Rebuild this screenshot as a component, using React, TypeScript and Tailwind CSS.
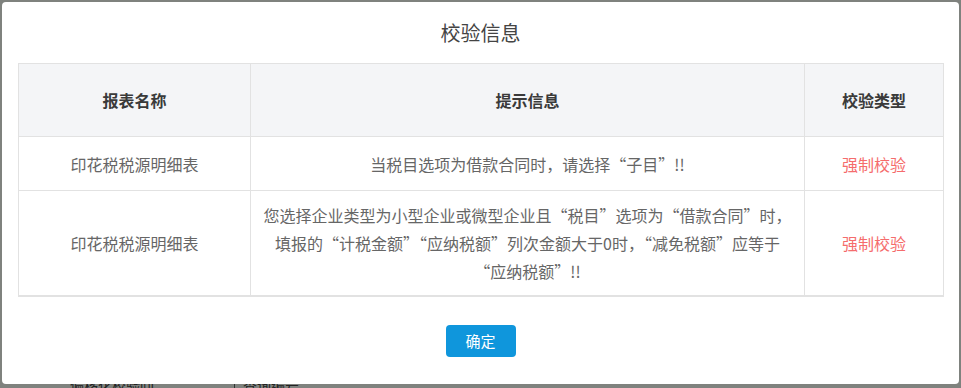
import React from 'react';

interface Row {
  report: string;
  lines: string[];
  type: string;
}

const rows: Row[] = [
  {
    report: '印花税税源明细表',
    lines: ['当税目选项为借款合同时，请选择“子目”!!'],
    type: '强制校验'
  },
  {
    report: '印花税税源明细表',
    lines: [
      '您选择企业类型为小型企业或微型企业且“税目”选项为“借款合同”时，',
      '填报的“计税金额”“应纳税额”列次金额大于0时，“减免税额”应等于',
      '“应纳税额”!!'
    ],
    type: '强制校验'
  }
];

export default function App() {
  return (
    <div
      className="h-[388px] w-[961px] overflow-hidden bg-[#7f827e] pt-[2px] pl-[2px]"
      style={{ fontFamily: '"Noto Sans CJK SC", "Noto Sans", sans-serif' }}
    >
      <div className="flex h-[382px] w-[957px] flex-col rounded-[4px] bg-white">
        <div className="flex h-[61px] items-center justify-center text-[20px] text-[#444]">
          校验信息
        </div>

        <div className="mx-[16px] w-[926px] border border-b-2 border-[#e2e2e2]">
          <div className="grid grid-cols-[232px_554px_1fr] bg-[#f4f5f7] text-[16px] font-bold text-[#3a3a3a]">
            <div className="flex h-[73px] items-center justify-center border-r border-b border-[#e2e2e2]">
              报表名称
            </div>
            <div className="flex h-[73px] items-center justify-center border-r border-b border-[#e2e2e2]">
              提示信息
            </div>
            <div className="flex h-[73px] items-center justify-center border-b border-[#e2e2e2]">
              校验类型
            </div>
          </div>

          {rows.map((row, i) => (
            <div
              key={i}
              className={
                i === 0
                  ? 'grid h-[54px] grid-cols-[232px_554px_1fr] border-b border-[#e2e2e2] text-[16px] text-[#666]'
                  : 'grid h-[104px] grid-cols-[232px_554px_1fr] text-[16px] text-[#666]'
              }
            >
              <div className="flex items-center justify-center border-r border-[#e2e2e2]">
                {row.report}
              </div>
              <div className="flex flex-col items-center justify-center border-r border-[#e2e2e2] leading-[28px]">
                {row.lines.map((line, j) => (
                  <span key={j} className="whitespace-nowrap">
                    {line}
                  </span>
                ))}
              </div>
              <div className="flex items-center justify-center text-[#f56c6c]">
                {row.type}
              </div>
            </div>
          ))}
        </div>

        <div className="mt-[28px] flex justify-center">
          <button
            type="button"
            className="h-[32px] w-[70px] rounded-[4px] bg-[#0f96dc] text-[15px] text-white"
          >
            确定
          </button>
        </div>
      </div>

      <div className="flex h-[4px] items-start overflow-hidden text-[14px] leading-[14px] text-[#222]">
        <span className="ml-[68px] mt-[-6px]">偏移化校验回</span>
        <span className="ml-[80px] mt-[-6px] border-l border-[#333] pl-[8px]">查询编号</span>
      </div>
    </div>
  );
}
